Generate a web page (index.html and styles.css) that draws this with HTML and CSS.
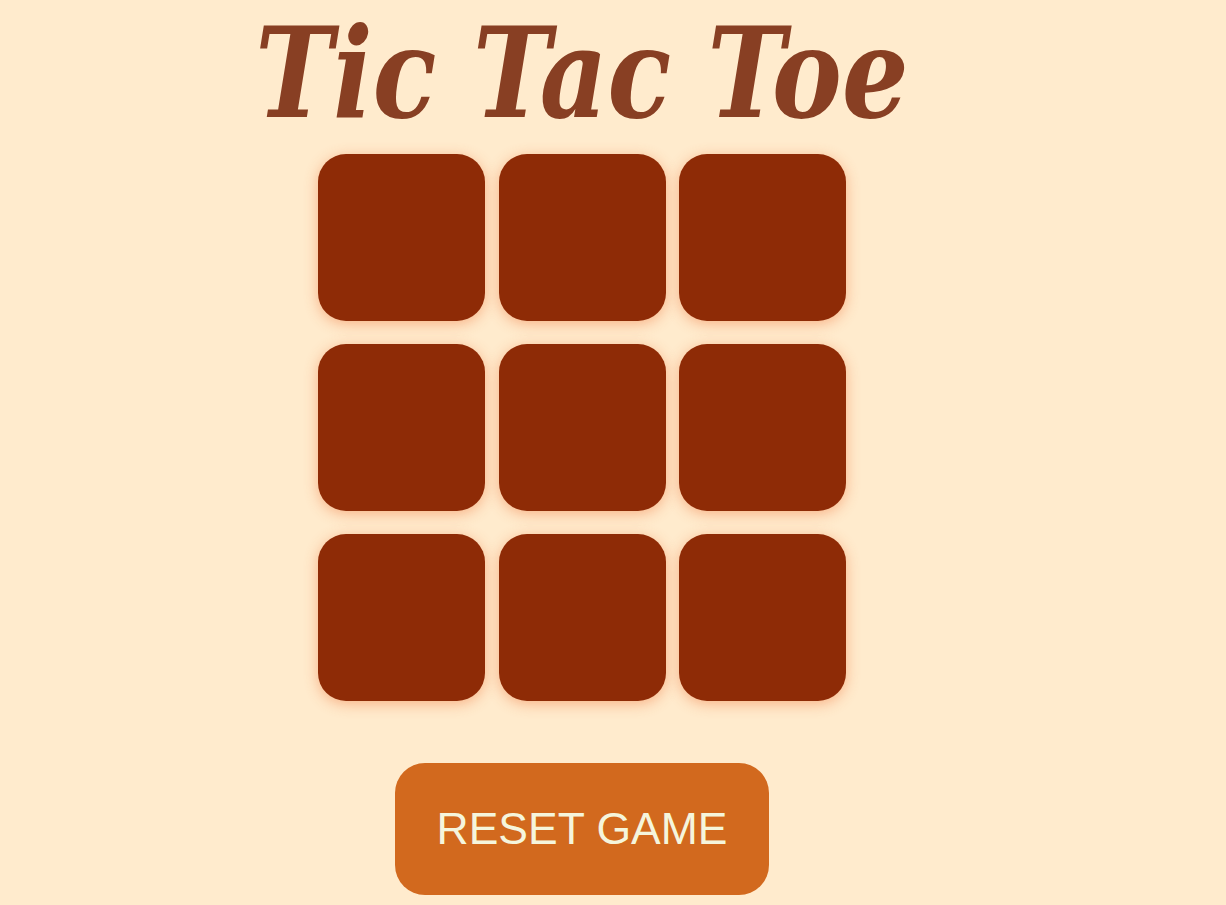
FILE: index.html
```html
<!DOCTYPE html>
<html>
<head>
<meta charset="utf-8">
<link rel="stylesheet" href="styles.css">
</head>
<body>
<main class="game">
  <h1 class="title">Tic Tac Toe</h1>
  <div class="board">
    <button class="cell"></button>
    <button class="cell"></button>
    <button class="cell"></button>
    <button class="cell"></button>
    <button class="cell"></button>
    <button class="cell"></button>
    <button class="cell"></button>
    <button class="cell"></button>
    <button class="cell"></button>
  </div>
  <button class="reset">RESET GAME</button>
</main>
</body>
</html>
```
FILE: styles.css
```css
html, body {
  margin: 0;
  padding: 0;
  background: #ffebcd;
}
.game {
  display: flex;
  flex-direction: column;
  align-items: center;
  padding-right: 62px;
}
.title {
  margin: 0 0 8px;
  font-family: "DejaVu Serif", serif;
  font-weight: bold;
  font-style: italic;
  font-stretch: condensed;
  font-size: 126px;
  line-height: 146px;
  color: #883f23;
  white-space: nowrap;
  transform: scaleX(0.923);
}
.board {
  display: grid;
  grid-template-columns: repeat(3, 167px);
  grid-auto-rows: 167px;
  column-gap: 13.5px;
  row-gap: 23px;
}
.cell {
  border: none;
  background: #8e2b06;
  border-radius: 28px;
  box-shadow: 0 3px 14px rgba(240, 110, 50, 0.45);
  padding: 0;
}
.reset {
  margin-top: 62px;
  width: 374px;
  height: 132px;
  border: none;
  border-radius: 30px;
  background: #d2691e;
  color: #f5f5dc;
  font-family: "Liberation Sans", Arial, sans-serif;
  font-size: 44.5px;
  padding: 0;
}
```
